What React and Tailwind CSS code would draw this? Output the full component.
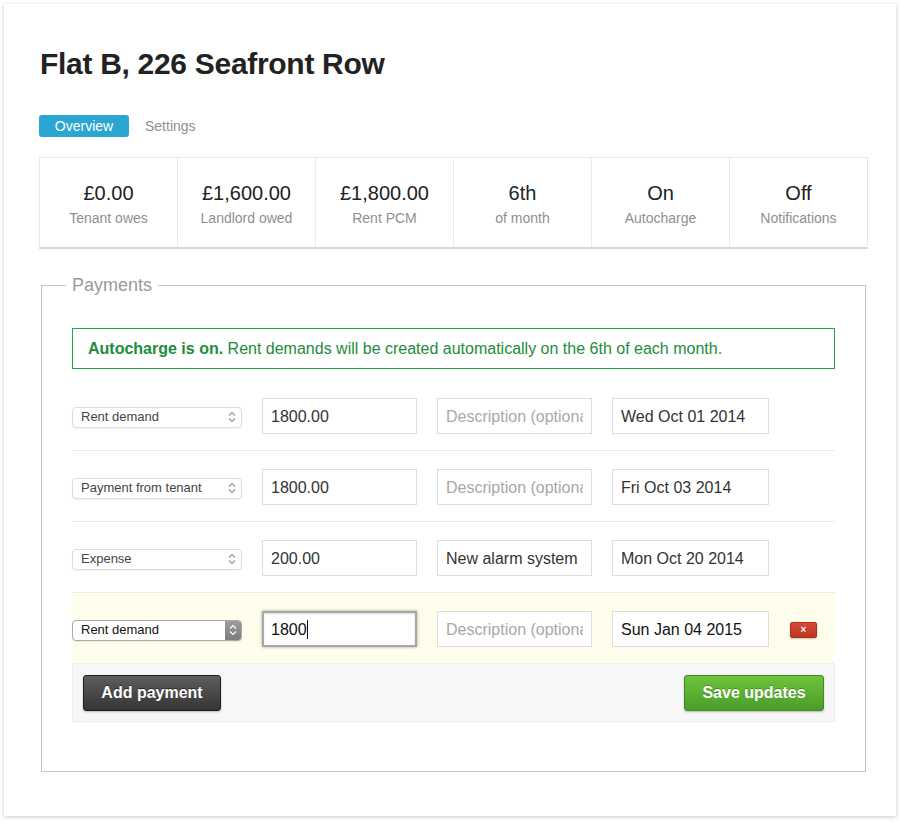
import React from "react";

function Chevrons({ color = "#999" }) {
  return (
    <svg width="8" height="12" viewBox="0 0 8 12" fill="none">
      <polyline points="1,4.5 4,1.5 7,4.5" stroke={color} strokeWidth="1.1" />
      <polyline points="1,7.5 4,10.5 7,7.5" stroke={color} strokeWidth="1.1" />
    </svg>
  );
}

function Select({ label, active }) {
  if (active) {
    return (
      <div className="w-[170px] h-[21px] mt-[2px] flex items-stretch rounded-[4px] border border-[#a9a9a9] bg-white overflow-hidden shadow-[0_1px_1px_rgba(0,0,0,0.08)]">
        <div className="flex-1 flex items-center pl-[8px] text-[13px] text-[#111]">{label}</div>
        <div className="w-[16px] flex items-center justify-center bg-gradient-to-b from-[#9c9c9c] to-[#7d7d7d]">
          <Chevrons color="#fff" />
        </div>
      </div>
    );
  }
  return (
    <div className="w-[170px] h-[21px] mt-[2px] flex items-center justify-between rounded-[4px] border border-[#dcdcdc] bg-white pl-[8px] pr-[5px] text-[13px] text-[#444] shadow-[0_1px_1px_rgba(0,0,0,0.05)]">
      <span>{label}</span>
      <Chevrons />
    </div>
  );
}

function Field({ value, placeholder, dark, wide }) {
  return (
    <div
      className={
        (wide ? "w-[157px]" : "w-[155px]") +
        " h-[36px] border border-[#dedede] bg-white px-[8px] pt-[1px] flex items-center text-[16px]"
      }
    >
      <div className="flex-1 overflow-hidden whitespace-nowrap">
        {value ? (
          <span className={dark ? "text-[#111]" : "text-[#333]"}>{value}</span>
        ) : (
          <span className="text-[#a8a8a8]">{placeholder}</span>
        )}
      </div>
    </div>
  );
}

function Row({ type, amount, desc, date, active }) {
  return (
    <div
      className={
        "flex items-center gap-[20px] pt-[18px] pb-[16px] border-b " +
        (active ? "bg-[#fffdeb] border-[#f0f0f0]" : "bg-white border-[#ececec]")
      }
    >
      <Select label={type} active={active} />
      {active ? (
        <div className="w-[155px] h-[36px] border-[2px] border-[#a7a7a7] bg-white px-[7px] pt-[1px] flex items-center text-[16px] text-[#111] shadow-[0_0_3px_rgba(0,0,0,0.35),inset_0_1px_2px_rgba(0,0,0,0.15)]">
          <span>1800</span>
          <span className="inline-block w-[1px] h-[19px] bg-[#111]" />
        </div>
      ) : (
        <Field value={amount} />
      )}
      <Field value={desc} placeholder="Description (optional)" />
      <Field value={date} dark={active} wide />
      {active && (
        <div className="ml-[1px] w-[27px] h-[16px] mt-[1px] rounded-[2px] bg-gradient-to-b from-[#d64a38] to-[#bf3324] border border-[#b0301f] flex items-center justify-center text-white text-[10px] font-bold leading-none shadow-[0_1px_2px_rgba(0,0,0,0.25)]">
          ×
        </div>
      )}
    </div>
  );
}

export default function App() {
  const stats = [
    ["£0.00", "Tenant owes"],
    ["£1,600.00", "Landlord owed"],
    ["£1,800.00", "Rent PCM"],
    ["6th", "of month"],
    ["On", "Autocharge"],
    ["Off", "Notifications"],
  ];
  return (
    <div className="w-[900px] h-[822px] bg-white pt-[4px] pl-[4px] font-['Liberation_Sans',Arial,sans-serif]">
      <div className="w-[892px] h-[812px] bg-white shadow-[0_1px_4px_rgba(0,0,0,0.22)] pt-[42px] pl-[35px]">
        <h1 className="text-[30px] leading-[36px] font-bold text-[#222] tracking-[-0.3px] pl-[1px]">
          Flat B, 226 Seafront Row
        </h1>
        <div className="mt-[33px] flex items-center gap-[16px]">
          <div className="w-[90px] h-[22px] rounded-[3px] bg-[#2ba6d3] text-white text-[14px] flex items-center justify-center">
            Overview
          </div>
          <div className="text-[14px] text-[#8e8e8e]">Settings</div>
        </div>
        <div className="mt-[20px] w-[829px] flex border border-[#e8e8e8] border-b-[2px] border-b-[#d6d6d6]">
          {stats.map(([v, l], i) => (
            <div
              key={l}
              className={
                "flex-1 h-[89px] pt-[2px] flex flex-col items-center justify-center " +
                (i < 5 ? "border-r border-[#ebebeb]" : "")
              }
            >
              <div className="text-[20px] leading-[24px] text-[#222]">{v}</div>
              <div className="text-[14px] leading-[18px] mt-[4px] text-[#8f8f8f]">{l}</div>
            </div>
          ))}
        </div>
        <fieldset className="mt-[24px] ml-[2px] w-[825px] h-[499px] border border-[#c4c4c4] pl-[30px] pr-[30px] pt-[31px]">
          <legend className="text-[18px] leading-[24px] text-[#9a9a9a] px-[6px] ml-[-6px]">Payments</legend>
          <div className="h-[41px] border border-[#22a646] flex items-center pl-[15px] pt-[1px] text-[16px] text-[#1d8c3b]">
            <span className="font-bold">Autocharge is on.</span>
            <span>&nbsp;Rent demands will be created automatically on the 6th of each month.</span>
          </div>
          <div className="mt-[11px]">
            <Row type="Rent demand" amount="1800.00" date="Wed Oct 01 2014" />
            <Row type="Payment from tenant" amount="1800.00" date="Fri Oct 03 2014" />
            <Row type="Expense" amount="200.00" desc="New alarm system" date="Mon Oct 20 2014" />
            <Row type="Rent demand" date="Sun Jan 04 2015" active />
          </div>
          <div className="h-[58px] bg-[#f7f7f7] border-b border-x border-[#ececec] flex items-center justify-between px-[10px]">
            <div className="w-[138px] h-[36px] rounded-[3px] border border-[#1f1f1f] bg-gradient-to-b from-[#5e5e5e] to-[#353535] text-white text-[16px] font-bold flex items-center justify-center [text-shadow:0_-1px_0_rgba(0,0,0,0.5)] shadow-[0_1px_2px_rgba(0,0,0,0.25)]">
              Add payment
            </div>
            <div className="w-[140px] h-[36px] rounded-[3px] border border-[#3e8a25] bg-gradient-to-b from-[#6ec43b] to-[#4a9c2a] text-white text-[16px] font-bold flex items-center justify-center [text-shadow:0_-1px_0_rgba(0,0,0,0.25)] shadow-[0_1px_2px_rgba(0,0,0,0.25)]">
              Save updates
            </div>
          </div>
        </fieldset>
      </div>
    </div>
  );
}
